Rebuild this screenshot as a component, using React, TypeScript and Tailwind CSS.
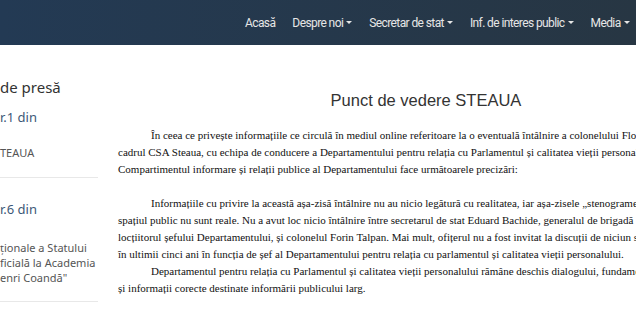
import React from "react";

const navItems: { label: string; caret: boolean }[] = [
  { label: "Acasă", caret: false },
  { label: "Despre noi", caret: true },
  { label: "Secretar de stat", caret: true },
  { label: "Inf. de interes public", caret: true },
  { label: "Media", caret: true },
];

function Caret() {
  return (
    <span className="ml-[3px] inline-block h-0 w-0 border-x-[3px] border-t-[3px] border-x-transparent border-t-[#e6e6e6] align-middle" />
  );
}

export default function App() {
  const serif = { fontFamily: '"Liberation Serif", "Times New Roman", serif' };
  return (
    <div className="h-[310px] w-[636px] overflow-hidden bg-white">
      {/* Header */}
      <header className="flex h-[45px] w-[636px] items-center bg-gradient-to-r from-[#233a54] to-[#273643]">
        <nav
          className="ml-[245px] flex shrink-0 items-center gap-[17px] whitespace-nowrap text-[12px] tracking-[-0.6px] text-[#e6e6e6]"
          style={{ fontFamily: 'Roboto, "Liberation Sans", sans-serif' }}
        >
          {navItems.map((n) => (
            <span key={n.label} className="flex items-center">
              {n.label}
              {n.caret && <Caret />}
            </span>
          ))}
        </nav>
      </header>

      <div className="flex">
        {/* Sidebar (partially scrolled off to the left) */}
        <aside
          className="w-[98px] shrink-0 overflow-hidden pt-[32px] whitespace-nowrap"
          style={{ fontFamily: '"Noto Sans", "Open Sans", sans-serif' }}
        >
          <div className="text-[15px] leading-[20px] text-[#333]">de presă</div>
          <div className="mt-[11px] text-[13px] leading-[18px] text-[#3d5877]">r.1 din</div>
          <div className="mt-[19px] text-[11px] leading-[16px] text-[#555]">TEAUA</div>
          <div className="mt-[16px] border-b border-[#e8e8e8]" />
          <div className="mt-[22px] text-[13px] leading-[18px] text-[#3d5877]">r.6 din</div>
          <div className="mt-[22px] text-[11px] leading-[15px] text-[#555]">
            <div>ționale a Statului</div>
            <div>ficială la Academia</div>
            <div>enri Coandă"</div>
          </div>
          <div className="mt-[16px] border-b border-[#e8e8e8]" />
        </aside>

        {/* Main article */}
        <main className="ml-[20px] w-[616px] shrink-0 pt-[44px]">
          <h1
            className="text-center text-[16.5px] leading-[22px] text-[#333]"
            style={{ fontFamily: '"Liberation Sans", Arial, sans-serif' }}
          >
            Punct de vedere STEAUA
          </h1>
          <div className="mt-[16px] whitespace-nowrap text-[11px] leading-[17px] text-[#111]" style={serif}>
            <div className="pl-[33px]">
              În ceea ce privește informațiile ce circulă în mediul online referitoare la o eventuală întâlnire a colonelului Florin Talpan, din
            </div>
            <div>
              cadrul CSA Steaua, cu echipa de conducere a Departamentului pentru relația cu Parlamentul și calitatea vieții personalului,
            </div>
            <div>Compartimentul informare și relații publice al Departamentului face următoarele precizări:</div>
            <div className="h-[17px]" />
            <div className="pl-[33px]">
              Informațiile cu privire la această așa-zisă întâlnire nu au nicio legătură cu realitatea, iar așa-zisele „stenograme" apărute în
            </div>
            <div>
              spațiul public nu sunt reale. Nu a avut loc nicio întâlnire între secretarul de stat Eduard Bachide, generalul de brigadă
            </div>
            <div>
              locțiitorul șefului Departamentului, și colonelul Forin Talpan. Mai mult, ofițerul nu a fost invitat la discuții de niciun sel
            </div>
            <div>
              în ultimii cinci ani în funcția de șef al Departamentului pentru relația cu parlamentul și calitatea vieții personalului.
            </div>
            <div className="pl-[33px]">
              Departamentul pentru relația cu Parlamentul și calitatea vieții personalului rămâne deschis dialogului, fundamentat
            </div>
            <div>și informații corecte destinate informării publicului larg.</div>
          </div>
        </main>
      </div>
    </div>
  );
}
